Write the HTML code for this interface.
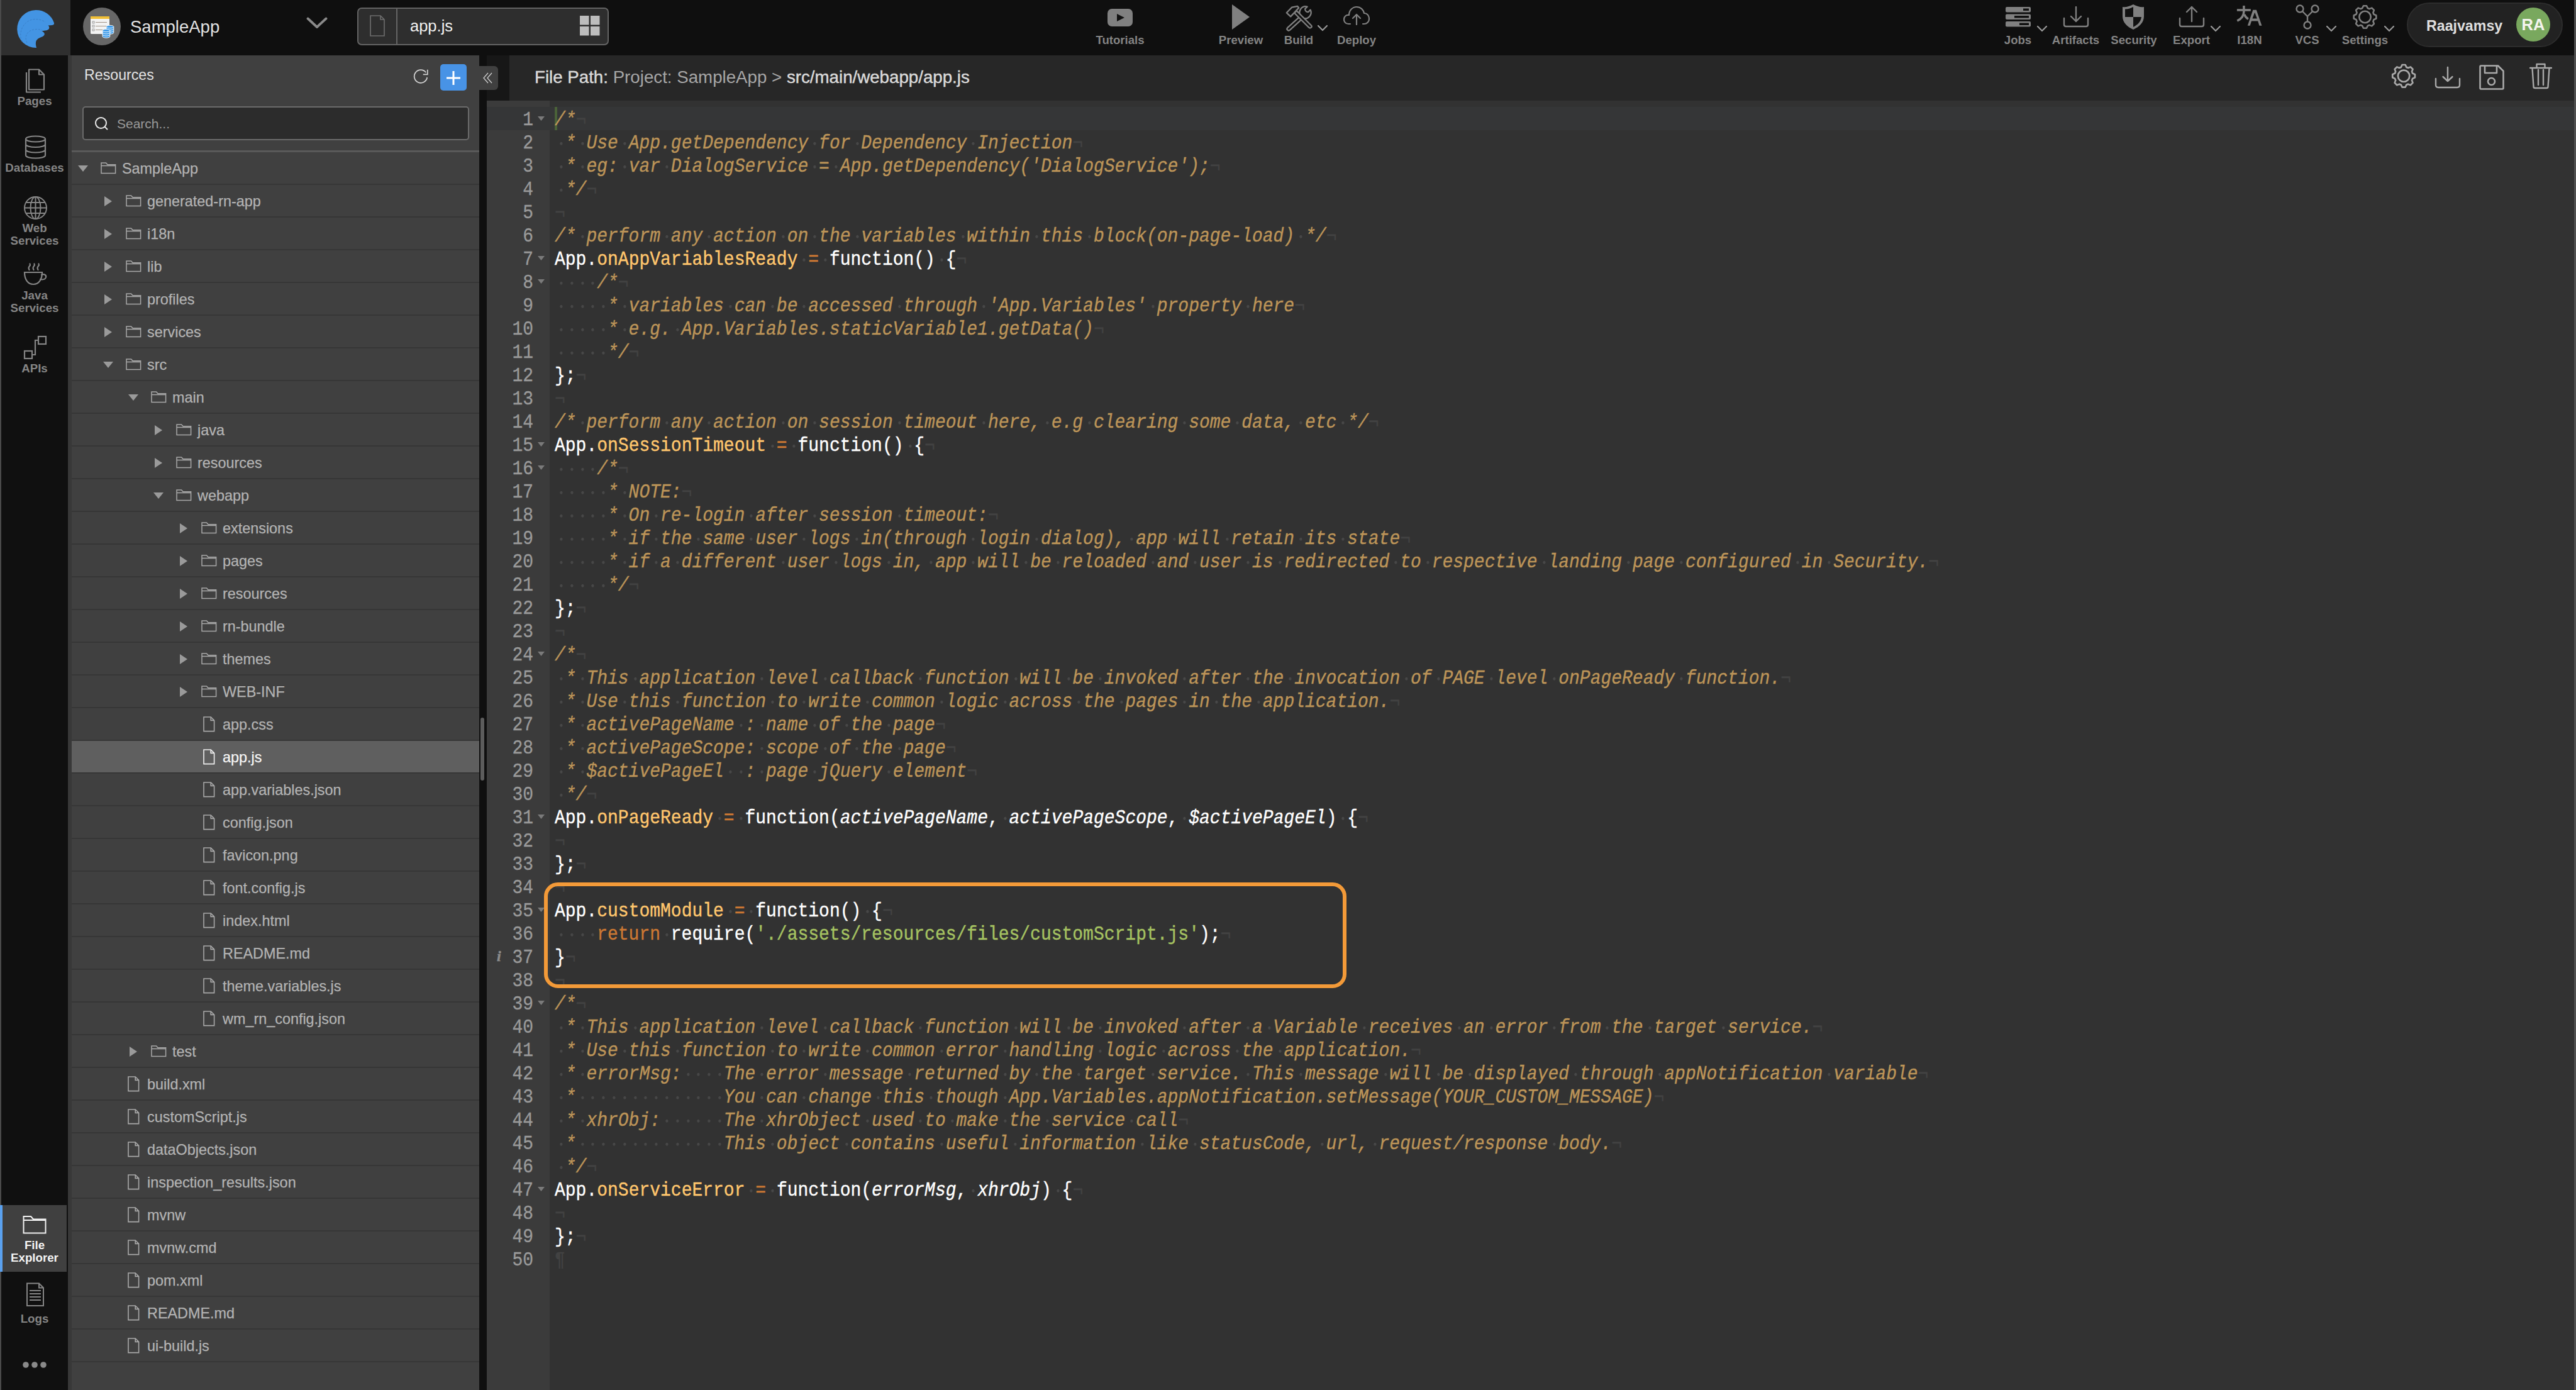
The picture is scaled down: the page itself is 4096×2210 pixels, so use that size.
<!DOCTYPE html><html><head><meta charset="utf-8"><title>app.js</title><style>
html,body{margin:0;padding:0}
body{width:4096px;height:2210px;overflow:hidden;position:relative;background:#0f0f0f;font-family:"Liberation Sans",sans-serif}
.a{position:absolute}
.t{position:absolute;white-space:pre;line-height:1}
.lbl{position:absolute;white-space:pre;line-height:1;font-weight:bold;color:#848484;font-size:18.6px;text-align:center}
.rl{position:absolute;white-space:pre;line-height:19.5px;font-weight:bold;color:#858585;font-size:18.7px;text-align:center;left:2px;width:106px}
.row{position:absolute;left:114px;width:648px;height:50px;border-bottom:2px solid #353535;background:#404040}
.row .tx{position:absolute;white-space:pre;font-size:23.4px;line-height:1;color:#b3b3b3;top:13px}
.cl{position:absolute;left:882px;height:37px;white-space:pre;font-family:"Liberation Mono",monospace;font-size:28px;line-height:37px;color:#fff;transform:translateY(2.2px) scaleY(1.13);transform-origin:0 55%;-webkit-text-stroke:0.35px currentColor}
.gn{position:absolute;left:774px;width:74px;height:37px;text-align:right;font-family:"Liberation Mono",monospace;font-size:28px;line-height:37px;color:#999;transform:translateY(2.2px) scaleY(1.13);transform-origin:0 55%;-webkit-text-stroke:0.3px currentColor}
.c{color:#BC9458;font-style:italic}
.i{color:#424242;font-style:normal}
.d{display:inline-block;width:16.8px;height:37px;vertical-align:top;background:radial-gradient(circle at 10.4px 19.2px,#474747 0,#474747 1.7px,rgba(71,71,71,0) 2.5px)}
.f{color:#FFC66D}
.k{color:#CC7833}
.s{color:#A5C261}
.p{font-style:italic}
</style></head><body><div class="a" style="left:0;top:0;width:2px;height:2210px;background:#4a4a4a"></div>
<div class="a" style="left:2px;top:0;width:110px;height:88px;background:#2f2f2f"></div>
<div class="a" style="left:2px;top:88px;width:106px;height:2122px;background:#101010"></div>
<div class="a" style="left:108px;top:88px;width:6px;height:2122px;background:#383838"></div>
<div class="a" style="left:114px;top:88px;width:648px;height:2122px;background:#404040"></div>
<div class="a" style="left:762px;top:88px;width:12px;height:2122px;background:#0f0f0f"></div>
<div class="a" style="left:774px;top:88px;width:36px;height:72px;background:#171717"></div>
<div class="a" style="left:810px;top:88px;width:3283px;height:72px;background:#272727"></div>
<div class="a" style="left:774px;top:160px;width:100px;height:2050px;background:#3b3b3b"></div>
<div class="a" style="left:874px;top:160px;width:3219px;height:2050px;background:#323232"></div>
<div class="a" style="left:4093px;top:0;width:3px;height:2210px;background:#505050"></div>
<svg class="a" style="left:0;top:0" width="112" height="88" viewBox="0 0 112 88">
<path d="M56.5 16 A30 30 0 0 1 86 36.5 Q86.5 39.5 83 40 L76.5 40.5 Q79 42.5 78 45.5 Q76.5 48 72 48.6 L66.5 49.2 Q71 51.5 70.8 54.5 Q70 57.5 65.5 59 Q59.5 61 57.5 65 Q56 69 58 76 A30 30 0 0 1 56.5 16 Z" fill="#4394e3"/>
<path d="M35 66 C30 56 33 40 46 33 C54 29 64 30 72 35" fill="none" stroke="#3a80c8" stroke-width="1" stroke-dasharray="3 2"/>
<path d="M43 68 C39 60 41 52 50 48 C56 46 62 46 67 48" fill="none" stroke="#3a80c8" stroke-width="1" stroke-dasharray="3 2"/>
</svg>
<svg class="a" style="left:132px;top:12px" width="60" height="60" viewBox="0 0 60 60">
<circle cx="30" cy="30" r="30" fill="#676767"/>
<rect x="12" y="14" width="30" height="28" rx="1.5" fill="#f3f3f3"/>
<rect x="12" y="14" width="30" height="4" fill="#f0bf36"/>
<rect x="15" y="22" width="3" height="3" fill="none" stroke="#888" stroke-width="0.8"/>
<rect x="15" y="28" width="3" height="3" fill="none" stroke="#888" stroke-width="0.8"/>
<rect x="15" y="34" width="3" height="3" fill="none" stroke="#888" stroke-width="0.8"/>
<line x1="20" y1="23.5" x2="38" y2="23.5" stroke="#8a7a6a" stroke-width="0.8"/>
<line x1="20" y1="29.5" x2="38" y2="29.5" stroke="#8a7a6a" stroke-width="0.8"/>
<line x1="20" y1="35.5" x2="34" y2="35.5" stroke="#8a7a6a" stroke-width="0.8"/>
<g fill="#3d9be9" stroke="#fff" stroke-width="0.9">
<path d="M37 30.5 v9.5 a5.9 2.2 0 0 0 11.8 0 v-9.5"/><ellipse cx="42.9" cy="30.5" rx="5.9" ry="2.2"/><path d="M37 33.7 a5.9 2.2 0 0 0 11.8 0 M37 36.9 a5.9 2.2 0 0 0 11.8 0" fill="none"/>
<path d="M31 36.5 v9.5 a5.9 2.2 0 0 0 11.8 0 v-9.5"/><ellipse cx="36.9" cy="36.5" rx="5.9" ry="2.2"/><path d="M31 39.7 a5.9 2.2 0 0 0 11.8 0 M31 42.9 a5.9 2.2 0 0 0 11.8 0" fill="none"/>
</g>
</svg>
<div class="t" style="left:207px;top:29px;font-size:27.5px;color:#e2e2e2">SampleApp</div>
<svg class="a" style="left:486px;top:26px" width="36" height="22" viewBox="0 0 36 22"><path d="M3.5 3.5 L18 17 L32.5 3.5" fill="none" stroke="#8a8a8a" stroke-width="3.8" stroke-linecap="round" stroke-linejoin="round"/></svg>
<div class="a" style="left:568px;top:12px;width:396px;height:56px;border:2px solid #646464;border-radius:7px;background:#2e2e2e"></div>
<div class="a" style="left:630px;top:14px;width:2px;height:56px;background:#646464"></div>
<svg class="a" style="left:586px;top:23px" width="28" height="36" viewBox="0 0 28 36"><path d="M3 2 H19 L25 8 V34 H3 Z M19 2 V8 H25" fill="none" stroke="#6e6e6e" stroke-width="1.6"/></svg>
<div class="t" style="left:652px;top:29px;font-size:25.5px;color:#f2f2f2">app.js</div>
<svg class="a" style="left:922px;top:25px" width="32" height="32" viewBox="0 0 32 32" fill="#bdbdbd"><rect x="0" y="0" width="14.5" height="14.5"/><rect x="17" y="0" width="14.5" height="14.5"/><rect x="0" y="17" width="14.5" height="14.5"/><rect x="17" y="17" width="14.5" height="14.5"/></svg>
<svg class="a" style="left:1760px;top:13px" width="42" height="30" viewBox="0 0 42 30"><rect x="1" y="1" width="40" height="28" rx="7" fill="#808080"/><path d="M16 9 L28 15 L16 21 Z" fill="#111"/></svg>
<div class="lbl" style="left:1721px;width:120px;top:54.7px">Tutorials</div>
<svg class="a" style="left:1958px;top:7px" width="30" height="40" viewBox="0 0 30 40"><path d="M1 0 L29 20 L1 40 Z" fill="#808080"/></svg>
<div class="lbl" style="left:1913px;width:120px;top:54.7px">Preview</div>
<svg class="a" style="left:2040px;top:2px" width="50" height="50" viewBox="0 0 50 50" fill="none" stroke="#808080" stroke-width="2.3" stroke-linejoin="round" stroke-linecap="round">
<path d="M31.8 26.8 L10.8 45.8 A2.5 2.5 0 0 1 7.2 42.2 L28.2 23.2"/>
<path d="M28.2 23.2 A9.5 9.5 0 0 1 38.6 8.6 L35.2 12 A4.4 4.4 0 0 0 40.2 17 L43.6 13.6 A9.5 9.5 0 0 1 31.8 26.8"/>
<path d="M21.8 15.2 L44.8 38.2 A2.5 2.5 0 0 1 41.2 41.8 L18.2 18.8 Z" fill="#111"/>
<path d="M5.8 18.3 L14.2 9.6 L23 7.8 L25.2 10.4 L12.2 24.4 Z" fill="#111"/>
</svg>
<svg class="a" style="left:2094px;top:39px" width="18" height="11" viewBox="0 0 18 11"><path d="M2 2 L9 9 L16 2" fill="none" stroke="#9a9a9a" stroke-width="2.2" stroke-linecap="round"/></svg>
<div class="lbl" style="left:2005px;width:120px;top:54.7px">Build</div>
<svg class="a" style="left:2136px;top:9px" width="42" height="31" viewBox="0 0 42 31" fill="none" stroke="#808080" stroke-width="2.2" stroke-linecap="round" stroke-linejoin="round"><path d="M11 29 H8 C3 29 1 25 1 22 C1 17 5 14 9 15 C9 7 15 2 21 2 C28 2 32 7 33 12 C38 12 41 16 41 21 C41 26 37 29 33 29 H31"/><path d="M21 30 V14 M15 20 L21 14 L27 20"/></svg>
<div class="lbl" style="left:2097px;width:120px;top:54.7px">Deploy</div>
<svg class="a" style="left:3188px;top:10px" width="42" height="33" viewBox="0 0 42 33"><g fill="#808080"><rect x="1" y="1" width="40" height="8.5" rx="2"/><rect x="1" y="12.5" width="40" height="8.5" rx="2"/><rect x="1" y="24" width="40" height="8.5" rx="2"/></g><g fill="#111"><rect x="29" y="3.5" width="9" height="3.5"/><rect x="15" y="15" width="23" height="3.5"/><rect x="23" y="26.5" width="15" height="3.5"/></g></svg>
<svg class="a" style="left:3238px;top:40px" width="18" height="11" viewBox="0 0 18 11"><path d="M2 2 L9 9 L16 2" fill="none" stroke="#9a9a9a" stroke-width="2.2" stroke-linecap="round"/></svg>
<div class="lbl" style="left:3148.5px;width:120px;top:54.7px">Jobs</div>
<svg class="a" style="left:3280px;top:10px" width="42" height="34" viewBox="0 0 42 34" fill="none" stroke="#808080" stroke-width="2.4" stroke-linecap="round" stroke-linejoin="round"><path d="M2 19 V29 C2 31 3 32 5 32 H37 C39 32 40 31 40 29 V19"/><path d="M21 1 V24 M13 16 L21 24 L29 16"/></svg>
<div class="lbl" style="left:3240.5px;width:120px;top:54.7px">Artifacts</div>
<svg class="a" style="left:3374px;top:6px" width="36" height="42" viewBox="0 0 36 42"><path d="M18 1 C12 4 6 6 1 5 V20 C1 30 9 37 18 41 C27 37 35 30 35 20 V5 C30 6 24 4 18 1 Z" fill="#808080"/><path d="M18 5 C14 7 9 9 5 8.5 V21 H18 Z" fill="#111"/><path d="M18 21 H31 C30 29 24 34 18 37 Z" fill="#111"/></svg>
<div class="lbl" style="left:3333px;width:120px;top:54.7px">Security</div>
<svg class="a" style="left:3464px;top:9px" width="42" height="35" viewBox="0 0 42 35" fill="none" stroke="#808080" stroke-width="2.4" stroke-linecap="round" stroke-linejoin="round"><path d="M2 20 V30 C2 32 3 33 5 33 H37 C39 33 40 32 40 30 V20"/><path d="M21 25 V2 M13 10 L21 2 L29 10"/></svg>
<svg class="a" style="left:3514px;top:40px" width="18" height="11" viewBox="0 0 18 11"><path d="M2 2 L9 9 L16 2" fill="none" stroke="#9a9a9a" stroke-width="2.2" stroke-linecap="round"/></svg>
<div class="lbl" style="left:3424.5px;width:120px;top:54.7px">Export</div>
<svg class="a" style="left:3545px;top:0px" width="65" height="50" viewBox="0 0 65 50"><g fill="none" stroke="#808080" stroke-width="3.5"><path d="M11.9 16 H33.8"/><path d="M22.9 9 V18 C22.9 25 19 30 12.3 33.2"/><path d="M23.6 23 C25 26.5 27 28.5 29.9 30.2"/></g><path fill-rule="evenodd" d="M28.8 40.8 L37.4 15.8 H42.8 L51.4 40.8 H47.5 L45.2 33.5 H35 L32.7 40.8 Z M36.5 29.5 H43.9 L40.2 19.8 Z" fill="#808080"/></svg>
<div class="lbl" style="left:3517px;width:120px;top:54.7px">I18N</div>
<svg class="a" style="left:3650px;top:7px" width="38" height="40" viewBox="0 0 38 40" fill="none" stroke="#808080" stroke-width="2.4"><circle cx="7" cy="7" r="5.5"/><circle cx="31" cy="7" r="5.5"/><circle cx="19" cy="33" r="5.5"/><path d="M11 11 L19 19 L27 11 M19 19 V27.5"/></svg>
<svg class="a" style="left:3698px;top:40px" width="18" height="11" viewBox="0 0 18 11"><path d="M2 2 L9 9 L16 2" fill="none" stroke="#9a9a9a" stroke-width="2.2" stroke-linecap="round"/></svg>
<div class="lbl" style="left:3608.5px;width:120px;top:54.7px">VCS</div>
<svg class="a" style="left:3735px;top:2px" width="50" height="50" viewBox="0 0 50 50" fill="none" stroke="#808080" stroke-width="2.6" stroke-linejoin="round"><path d="M21.23 11.04 L22.99 7.18 L28.01 7.18 L29.77 11.04 A14.60 14.60 0 0 1 32.35 12.11 L36.33 10.62 L39.88 14.17 L38.39 18.15 A14.60 14.60 0 0 1 39.46 20.73 L43.32 22.49 L43.32 27.51 L39.46 29.27 A14.60 14.60 0 0 1 38.39 31.85 L39.88 35.83 L36.33 39.38 L32.35 37.89 A14.60 14.60 0 0 1 29.77 38.96 L28.01 42.82 L22.99 42.82 L21.23 38.96 A14.60 14.60 0 0 1 18.65 37.89 L14.67 39.38 L11.12 35.83 L12.61 31.85 A14.60 14.60 0 0 1 11.54 29.27 L7.68 27.51 L7.68 22.49 L11.54 20.73 A14.60 14.60 0 0 1 12.61 18.15 L11.12 14.17 L14.67 10.62 L18.65 12.11 A14.60 14.60 0 0 1 21.23 11.04 Z"/><circle cx="25.5" cy="25" r="9.2"/></svg>
<svg class="a" style="left:3790px;top:40px" width="18" height="11" viewBox="0 0 18 11"><path d="M2 2 L9 9 L16 2" fill="none" stroke="#9a9a9a" stroke-width="2.2" stroke-linecap="round"/></svg>
<div class="lbl" style="left:3700.5px;width:120px;top:54.7px">Settings</div>
<div class="a" style="left:3827px;top:4px;width:244px;height:67px;border:2px solid #2c2c2c;border-radius:36px;background:#222"></div>
<div class="t" style="left:3858px;top:30px;font-size:23.2px;font-weight:bold;color:#dedede">Raajvamsy</div>
<div class="a" style="left:4001px;top:12px;width:54px;height:54px;border-radius:27px;background:#79a85e"></div>
<div class="t" style="left:4001px;width:54px;text-align:center;top:27px;font-size:25.5px;font-weight:bold;color:#f4f4ee">RA</div>
<svg class="a" style="left:40px;top:109px" width="34" height="39" viewBox="0 0 34 39" fill="none" stroke="#858585" stroke-width="2.2" stroke-linejoin="round"><path d="M6 1.5 H22 L30 9.5 V33.5 H6 Z"/><path d="M22 1.5 V9.5 H30"/><path d="M2 6 V37.5 H25"/></svg>
<div class="rl" style="top:151px">Pages</div>
<svg class="a" style="left:39px;top:215px" width="35" height="38" viewBox="0 0 35 38" fill="none" stroke="#858585" stroke-width="2.2"><ellipse cx="17.5" cy="6" rx="15.5" ry="4.5"/><path d="M2 6 V32 C2 34.5 9 36.5 17.5 36.5 C26 36.5 33 34.5 33 32 V6"/><path d="M2 14.5 C2 17 9 19 17.5 19 C26 19 33 17 33 14.5 M2 23 C2 25.5 9 27.5 17.5 27.5 C26 27.5 33 25.5 33 23"/></svg>
<div class="rl" style="top:257px">Databases</div>
<svg class="a" style="left:37px;top:311px" width="39" height="39" viewBox="0 0 39 39" fill="none" stroke="#858585" stroke-width="2"><circle cx="19.5" cy="19.5" r="17.5"/><ellipse cx="19.5" cy="19.5" rx="8" ry="17.5"/><path d="M19.5 2 V37 M2 19.5 H37 M4.5 11 H34.5 M4.5 28 H34.5"/></svg>
<div class="rl" style="top:353px">Web
Services</div>
<svg class="a" style="left:37px;top:418px" width="39" height="37" viewBox="0 0 39 37" fill="none" stroke="#858585" stroke-width="2.2" stroke-linecap="round"><path d="M9.5 11 C8 8.5 8.5 6.5 10 5 C11 4 11 2.5 10.5 1.5 M16.5 11 C15 8.5 15.5 6.5 17 5 C18 4 18 2.5 17.5 1.5 M23.5 11 C22 8.5 22.5 6.5 24 5 C25 4 25 2.5 24.5 1.5"/><path d="M2 15 H30 C30 26 25 34 16 34 C7 34 2 26 2 15 Z"/><path d="M29 19 C33 17 37 19 36 23 C35 26 31 27 27 26"/></svg>
<div class="rl" style="top:460px">Java
Services</div>
<svg class="a" style="left:37px;top:533px" width="39" height="39" viewBox="0 0 39 39" fill="none" stroke="#858585" stroke-width="2.2"><rect x="24" y="2" width="12" height="12"/><rect x="2" y="25" width="12" height="12"/><path d="M14 31 H19 V8 H24"/></svg>
<div class="rl" style="top:576px">APIs</div>
<div class="a" style="left:2px;top:1916px;width:104px;height:106px;background:#404040"></div>
<div class="a" style="left:0;top:1916px;width:4px;height:106px;background:#5aa1ef"></div>
<svg class="a" style="left:36px;top:1932px" width="38" height="30" viewBox="0 0 38 30" fill="none" stroke="#f2f2f2" stroke-width="2"><path d="M1.5 28.5 V2 H13 L17 6.5 H36.5 V28.5 Z M1.5 8 H36.5"/></svg>
<div class="rl" style="top:1970px;color:#f4f4f4">File
Explorer</div>
<svg class="a" style="left:41px;top:2039px" width="30" height="39" viewBox="0 0 30 39" fill="none" stroke="#858585" stroke-width="2"><path d="M2 1.5 H21 L28 8.5 V37 H2 Z M21 1.5 V8.5 H28"/><path d="M6 13 H24 M6 18 H24 M6 23 H24 M6 28 H24" stroke-width="2.2"/></svg>
<div class="rl" style="top:2087px">Logs</div>
<svg class="a" style="left:35px;top:2164px" width="42" height="12" viewBox="0 0 42 12" fill="#8a8a8a"><circle cx="6" cy="6" r="4.8"/><circle cx="20" cy="6" r="4.8"/><circle cx="34" cy="6" r="4.8"/></svg>
<div class="t" style="left:134px;top:108px;font-size:23.2px;color:#e3e3e3">Resources</div>
<svg class="a" style="left:656px;top:109px" width="27" height="26" viewBox="0 0 27 26" fill="none" stroke="#d2d2d2" stroke-width="1.7"><path d="M23.2 14 A10.3 10.3 0 1 1 21.2 6.2"/><path d="M23.8 1.8 V9.4 H16.8"/></svg>
<div class="a" style="left:700px;top:102px;width:42px;height:42px;border-radius:5px;background:#4893e6"></div>
<svg class="a" style="left:700px;top:102px" width="42" height="42" viewBox="0 0 42 42" stroke="#fff" stroke-width="3"><path d="M21 11 V33 M10 22 H32"/></svg>
<div class="a" style="left:762px;top:105px;width:30px;height:38px;border-radius:0 6px 6px 0;background:#404040"></div>
<svg class="a" style="left:767px;top:114px" width="18" height="20" viewBox="0 0 18 20" fill="none" stroke="#d0d0d0" stroke-width="1.3"><path d="M9 2 L2 10 L9 18 M15 2 L8 10 L15 18"/></svg>
<div class="a" style="left:131px;top:169px;width:611px;height:50px;border:2px solid #6b6b6b;border-radius:5px;background:#2c2c2c"></div>
<svg class="a" style="left:150px;top:185px" width="24" height="24" viewBox="0 0 24 24" fill="none" stroke="#eaeaea" stroke-width="2"><circle cx="10.5" cy="10.5" r="8.5"/><path d="M16.5 16.5 L21 21"/></svg>
<div class="t" style="left:186px;top:185.5px;font-size:21px;color:#9a9a9a">Search...</div>
<div class="a" style="left:114px;top:239px;width:648px;height:3px;background:#595959"></div>
<div class="a" style="left:114px;top:242px;width:648px;height:50px;background:#404040"></div>
<div class="a" style="left:114px;top:292px;width:648px;height:2px;background:#363636"></div>
<svg class="a" style="left:124px;top:263px" width="16" height="10" viewBox="0 0 16 10"><path d="M0 0 H16 L8 10 Z" fill="#9a9a9a"/></svg>
<svg class="a" style="left:160px;top:258px" width="25" height="20" viewBox="0 0 25 20" fill="none" stroke="#a8a8a8" stroke-width="1.5"><path d="M1 17.6 V1 H8.5 L11 3.8 H23.6 V17.6 Z M1 5.4 H23.6"/></svg>
<div class="t" style="left:194px;top:256.5px;font-size:23.4px;color:#b3b3b3;-webkit-text-stroke:0.25px #b3b3b3">SampleApp</div>
<div class="a" style="left:114px;top:294px;width:648px;height:50px;background:#404040"></div>
<div class="a" style="left:114px;top:344px;width:648px;height:2px;background:#363636"></div>
<svg class="a" style="left:166px;top:312px" width="12" height="16" viewBox="0 0 12 16"><path d="M0 0 V16 L12 8 Z" fill="#9a9a9a"/></svg>
<svg class="a" style="left:200px;top:310px" width="25" height="20" viewBox="0 0 25 20" fill="none" stroke="#a8a8a8" stroke-width="1.5"><path d="M1 17.6 V1 H8.5 L11 3.8 H23.6 V17.6 Z M1 5.4 H23.6"/></svg>
<div class="t" style="left:234px;top:308.5px;font-size:23.4px;color:#b3b3b3;-webkit-text-stroke:0.25px #b3b3b3">generated-rn-app</div>
<div class="a" style="left:114px;top:346px;width:648px;height:50px;background:#404040"></div>
<div class="a" style="left:114px;top:396px;width:648px;height:2px;background:#363636"></div>
<svg class="a" style="left:166px;top:364px" width="12" height="16" viewBox="0 0 12 16"><path d="M0 0 V16 L12 8 Z" fill="#9a9a9a"/></svg>
<svg class="a" style="left:200px;top:362px" width="25" height="20" viewBox="0 0 25 20" fill="none" stroke="#a8a8a8" stroke-width="1.5"><path d="M1 17.6 V1 H8.5 L11 3.8 H23.6 V17.6 Z M1 5.4 H23.6"/></svg>
<div class="t" style="left:234px;top:360.5px;font-size:23.4px;color:#b3b3b3;-webkit-text-stroke:0.25px #b3b3b3">i18n</div>
<div class="a" style="left:114px;top:398px;width:648px;height:50px;background:#404040"></div>
<div class="a" style="left:114px;top:448px;width:648px;height:2px;background:#363636"></div>
<svg class="a" style="left:166px;top:416px" width="12" height="16" viewBox="0 0 12 16"><path d="M0 0 V16 L12 8 Z" fill="#9a9a9a"/></svg>
<svg class="a" style="left:200px;top:414px" width="25" height="20" viewBox="0 0 25 20" fill="none" stroke="#a8a8a8" stroke-width="1.5"><path d="M1 17.6 V1 H8.5 L11 3.8 H23.6 V17.6 Z M1 5.4 H23.6"/></svg>
<div class="t" style="left:234px;top:412.5px;font-size:23.4px;color:#b3b3b3;-webkit-text-stroke:0.25px #b3b3b3">lib</div>
<div class="a" style="left:114px;top:450px;width:648px;height:50px;background:#404040"></div>
<div class="a" style="left:114px;top:500px;width:648px;height:2px;background:#363636"></div>
<svg class="a" style="left:166px;top:468px" width="12" height="16" viewBox="0 0 12 16"><path d="M0 0 V16 L12 8 Z" fill="#9a9a9a"/></svg>
<svg class="a" style="left:200px;top:466px" width="25" height="20" viewBox="0 0 25 20" fill="none" stroke="#a8a8a8" stroke-width="1.5"><path d="M1 17.6 V1 H8.5 L11 3.8 H23.6 V17.6 Z M1 5.4 H23.6"/></svg>
<div class="t" style="left:234px;top:464.5px;font-size:23.4px;color:#b3b3b3;-webkit-text-stroke:0.25px #b3b3b3">profiles</div>
<div class="a" style="left:114px;top:502px;width:648px;height:50px;background:#404040"></div>
<div class="a" style="left:114px;top:552px;width:648px;height:2px;background:#363636"></div>
<svg class="a" style="left:166px;top:520px" width="12" height="16" viewBox="0 0 12 16"><path d="M0 0 V16 L12 8 Z" fill="#9a9a9a"/></svg>
<svg class="a" style="left:200px;top:518px" width="25" height="20" viewBox="0 0 25 20" fill="none" stroke="#a8a8a8" stroke-width="1.5"><path d="M1 17.6 V1 H8.5 L11 3.8 H23.6 V17.6 Z M1 5.4 H23.6"/></svg>
<div class="t" style="left:234px;top:516.5px;font-size:23.4px;color:#b3b3b3;-webkit-text-stroke:0.25px #b3b3b3">services</div>
<div class="a" style="left:114px;top:554px;width:648px;height:50px;background:#404040"></div>
<div class="a" style="left:114px;top:604px;width:648px;height:2px;background:#363636"></div>
<svg class="a" style="left:164px;top:575px" width="16" height="10" viewBox="0 0 16 10"><path d="M0 0 H16 L8 10 Z" fill="#9a9a9a"/></svg>
<svg class="a" style="left:200px;top:570px" width="25" height="20" viewBox="0 0 25 20" fill="none" stroke="#a8a8a8" stroke-width="1.5"><path d="M1 17.6 V1 H8.5 L11 3.8 H23.6 V17.6 Z M1 5.4 H23.6"/></svg>
<div class="t" style="left:234px;top:568.5px;font-size:23.4px;color:#b3b3b3;-webkit-text-stroke:0.25px #b3b3b3">src</div>
<div class="a" style="left:114px;top:606px;width:648px;height:50px;background:#404040"></div>
<div class="a" style="left:114px;top:656px;width:648px;height:2px;background:#363636"></div>
<svg class="a" style="left:204px;top:627px" width="16" height="10" viewBox="0 0 16 10"><path d="M0 0 H16 L8 10 Z" fill="#9a9a9a"/></svg>
<svg class="a" style="left:240px;top:622px" width="25" height="20" viewBox="0 0 25 20" fill="none" stroke="#a8a8a8" stroke-width="1.5"><path d="M1 17.6 V1 H8.5 L11 3.8 H23.6 V17.6 Z M1 5.4 H23.6"/></svg>
<div class="t" style="left:274px;top:620.5px;font-size:23.4px;color:#b3b3b3;-webkit-text-stroke:0.25px #b3b3b3">main</div>
<div class="a" style="left:114px;top:658px;width:648px;height:50px;background:#404040"></div>
<div class="a" style="left:114px;top:708px;width:648px;height:2px;background:#363636"></div>
<svg class="a" style="left:246px;top:676px" width="12" height="16" viewBox="0 0 12 16"><path d="M0 0 V16 L12 8 Z" fill="#9a9a9a"/></svg>
<svg class="a" style="left:280px;top:674px" width="25" height="20" viewBox="0 0 25 20" fill="none" stroke="#a8a8a8" stroke-width="1.5"><path d="M1 17.6 V1 H8.5 L11 3.8 H23.6 V17.6 Z M1 5.4 H23.6"/></svg>
<div class="t" style="left:314px;top:672.5px;font-size:23.4px;color:#b3b3b3;-webkit-text-stroke:0.25px #b3b3b3">java</div>
<div class="a" style="left:114px;top:710px;width:648px;height:50px;background:#404040"></div>
<div class="a" style="left:114px;top:760px;width:648px;height:2px;background:#363636"></div>
<svg class="a" style="left:246px;top:728px" width="12" height="16" viewBox="0 0 12 16"><path d="M0 0 V16 L12 8 Z" fill="#9a9a9a"/></svg>
<svg class="a" style="left:280px;top:726px" width="25" height="20" viewBox="0 0 25 20" fill="none" stroke="#a8a8a8" stroke-width="1.5"><path d="M1 17.6 V1 H8.5 L11 3.8 H23.6 V17.6 Z M1 5.4 H23.6"/></svg>
<div class="t" style="left:314px;top:724.5px;font-size:23.4px;color:#b3b3b3;-webkit-text-stroke:0.25px #b3b3b3">resources</div>
<div class="a" style="left:114px;top:762px;width:648px;height:50px;background:#404040"></div>
<div class="a" style="left:114px;top:812px;width:648px;height:2px;background:#363636"></div>
<svg class="a" style="left:244px;top:783px" width="16" height="10" viewBox="0 0 16 10"><path d="M0 0 H16 L8 10 Z" fill="#9a9a9a"/></svg>
<svg class="a" style="left:280px;top:778px" width="25" height="20" viewBox="0 0 25 20" fill="none" stroke="#a8a8a8" stroke-width="1.5"><path d="M1 17.6 V1 H8.5 L11 3.8 H23.6 V17.6 Z M1 5.4 H23.6"/></svg>
<div class="t" style="left:314px;top:776.5px;font-size:23.4px;color:#b3b3b3;-webkit-text-stroke:0.25px #b3b3b3">webapp</div>
<div class="a" style="left:114px;top:814px;width:648px;height:50px;background:#404040"></div>
<div class="a" style="left:114px;top:864px;width:648px;height:2px;background:#363636"></div>
<svg class="a" style="left:286px;top:832px" width="12" height="16" viewBox="0 0 12 16"><path d="M0 0 V16 L12 8 Z" fill="#9a9a9a"/></svg>
<svg class="a" style="left:320px;top:830px" width="25" height="20" viewBox="0 0 25 20" fill="none" stroke="#a8a8a8" stroke-width="1.5"><path d="M1 17.6 V1 H8.5 L11 3.8 H23.6 V17.6 Z M1 5.4 H23.6"/></svg>
<div class="t" style="left:354px;top:828.5px;font-size:23.4px;color:#b3b3b3;-webkit-text-stroke:0.25px #b3b3b3">extensions</div>
<div class="a" style="left:114px;top:866px;width:648px;height:50px;background:#404040"></div>
<div class="a" style="left:114px;top:916px;width:648px;height:2px;background:#363636"></div>
<svg class="a" style="left:286px;top:884px" width="12" height="16" viewBox="0 0 12 16"><path d="M0 0 V16 L12 8 Z" fill="#9a9a9a"/></svg>
<svg class="a" style="left:320px;top:882px" width="25" height="20" viewBox="0 0 25 20" fill="none" stroke="#a8a8a8" stroke-width="1.5"><path d="M1 17.6 V1 H8.5 L11 3.8 H23.6 V17.6 Z M1 5.4 H23.6"/></svg>
<div class="t" style="left:354px;top:880.5px;font-size:23.4px;color:#b3b3b3;-webkit-text-stroke:0.25px #b3b3b3">pages</div>
<div class="a" style="left:114px;top:918px;width:648px;height:50px;background:#404040"></div>
<div class="a" style="left:114px;top:968px;width:648px;height:2px;background:#363636"></div>
<svg class="a" style="left:286px;top:936px" width="12" height="16" viewBox="0 0 12 16"><path d="M0 0 V16 L12 8 Z" fill="#9a9a9a"/></svg>
<svg class="a" style="left:320px;top:934px" width="25" height="20" viewBox="0 0 25 20" fill="none" stroke="#a8a8a8" stroke-width="1.5"><path d="M1 17.6 V1 H8.5 L11 3.8 H23.6 V17.6 Z M1 5.4 H23.6"/></svg>
<div class="t" style="left:354px;top:932.5px;font-size:23.4px;color:#b3b3b3;-webkit-text-stroke:0.25px #b3b3b3">resources</div>
<div class="a" style="left:114px;top:970px;width:648px;height:50px;background:#404040"></div>
<div class="a" style="left:114px;top:1020px;width:648px;height:2px;background:#363636"></div>
<svg class="a" style="left:286px;top:988px" width="12" height="16" viewBox="0 0 12 16"><path d="M0 0 V16 L12 8 Z" fill="#9a9a9a"/></svg>
<svg class="a" style="left:320px;top:986px" width="25" height="20" viewBox="0 0 25 20" fill="none" stroke="#a8a8a8" stroke-width="1.5"><path d="M1 17.6 V1 H8.5 L11 3.8 H23.6 V17.6 Z M1 5.4 H23.6"/></svg>
<div class="t" style="left:354px;top:984.5px;font-size:23.4px;color:#b3b3b3;-webkit-text-stroke:0.25px #b3b3b3">rn-bundle</div>
<div class="a" style="left:114px;top:1022px;width:648px;height:50px;background:#404040"></div>
<div class="a" style="left:114px;top:1072px;width:648px;height:2px;background:#363636"></div>
<svg class="a" style="left:286px;top:1040px" width="12" height="16" viewBox="0 0 12 16"><path d="M0 0 V16 L12 8 Z" fill="#9a9a9a"/></svg>
<svg class="a" style="left:320px;top:1038px" width="25" height="20" viewBox="0 0 25 20" fill="none" stroke="#a8a8a8" stroke-width="1.5"><path d="M1 17.6 V1 H8.5 L11 3.8 H23.6 V17.6 Z M1 5.4 H23.6"/></svg>
<div class="t" style="left:354px;top:1036.5px;font-size:23.4px;color:#b3b3b3;-webkit-text-stroke:0.25px #b3b3b3">themes</div>
<div class="a" style="left:114px;top:1074px;width:648px;height:50px;background:#404040"></div>
<div class="a" style="left:114px;top:1124px;width:648px;height:2px;background:#363636"></div>
<svg class="a" style="left:286px;top:1092px" width="12" height="16" viewBox="0 0 12 16"><path d="M0 0 V16 L12 8 Z" fill="#9a9a9a"/></svg>
<svg class="a" style="left:320px;top:1090px" width="25" height="20" viewBox="0 0 25 20" fill="none" stroke="#a8a8a8" stroke-width="1.5"><path d="M1 17.6 V1 H8.5 L11 3.8 H23.6 V17.6 Z M1 5.4 H23.6"/></svg>
<div class="t" style="left:354px;top:1088.5px;font-size:23.4px;color:#b3b3b3;-webkit-text-stroke:0.25px #b3b3b3">WEB-INF</div>
<div class="a" style="left:114px;top:1126px;width:648px;height:50px;background:#404040"></div>
<div class="a" style="left:114px;top:1176px;width:648px;height:2px;background:#363636"></div>
<svg class="a" style="left:323px;top:1139px" width="19" height="25" viewBox="0 0 19 25" fill="none" stroke="#a8a8a8" stroke-width="1.6"><path d="M1 1 H12.2 L17.6 6.4 V23.6 H1 Z M12.2 1 V6.4 H17.6"/></svg>
<div class="t" style="left:354px;top:1140.5px;font-size:23.4px;color:#b3b3b3;-webkit-text-stroke:0.25px #b3b3b3">app.css</div>
<div class="a" style="left:114px;top:1178px;width:648px;height:50px;background:#5f5f5f"></div>
<div class="a" style="left:114px;top:1228px;width:648px;height:2px;background:#363636"></div>
<svg class="a" style="left:323px;top:1191px" width="19" height="25" viewBox="0 0 19 25" fill="none" stroke="#f0f0f0" stroke-width="1.6"><path d="M1 1 H12.2 L17.6 6.4 V23.6 H1 Z M12.2 1 V6.4 H17.6"/></svg>
<div class="t" style="left:354px;top:1192.5px;font-size:23.4px;color:#f6f6f6;-webkit-text-stroke:0.25px #f6f6f6">app.js</div>
<div class="a" style="left:114px;top:1230px;width:648px;height:50px;background:#404040"></div>
<div class="a" style="left:114px;top:1280px;width:648px;height:2px;background:#363636"></div>
<svg class="a" style="left:323px;top:1243px" width="19" height="25" viewBox="0 0 19 25" fill="none" stroke="#a8a8a8" stroke-width="1.6"><path d="M1 1 H12.2 L17.6 6.4 V23.6 H1 Z M12.2 1 V6.4 H17.6"/></svg>
<div class="t" style="left:354px;top:1244.5px;font-size:23.4px;color:#b3b3b3;-webkit-text-stroke:0.25px #b3b3b3">app.variables.json</div>
<div class="a" style="left:114px;top:1282px;width:648px;height:50px;background:#404040"></div>
<div class="a" style="left:114px;top:1332px;width:648px;height:2px;background:#363636"></div>
<svg class="a" style="left:323px;top:1295px" width="19" height="25" viewBox="0 0 19 25" fill="none" stroke="#a8a8a8" stroke-width="1.6"><path d="M1 1 H12.2 L17.6 6.4 V23.6 H1 Z M12.2 1 V6.4 H17.6"/></svg>
<div class="t" style="left:354px;top:1296.5px;font-size:23.4px;color:#b3b3b3;-webkit-text-stroke:0.25px #b3b3b3">config.json</div>
<div class="a" style="left:114px;top:1334px;width:648px;height:50px;background:#404040"></div>
<div class="a" style="left:114px;top:1384px;width:648px;height:2px;background:#363636"></div>
<svg class="a" style="left:323px;top:1347px" width="19" height="25" viewBox="0 0 19 25" fill="none" stroke="#a8a8a8" stroke-width="1.6"><path d="M1 1 H12.2 L17.6 6.4 V23.6 H1 Z M12.2 1 V6.4 H17.6"/></svg>
<div class="t" style="left:354px;top:1348.5px;font-size:23.4px;color:#b3b3b3;-webkit-text-stroke:0.25px #b3b3b3">favicon.png</div>
<div class="a" style="left:114px;top:1386px;width:648px;height:50px;background:#404040"></div>
<div class="a" style="left:114px;top:1436px;width:648px;height:2px;background:#363636"></div>
<svg class="a" style="left:323px;top:1399px" width="19" height="25" viewBox="0 0 19 25" fill="none" stroke="#a8a8a8" stroke-width="1.6"><path d="M1 1 H12.2 L17.6 6.4 V23.6 H1 Z M12.2 1 V6.4 H17.6"/></svg>
<div class="t" style="left:354px;top:1400.5px;font-size:23.4px;color:#b3b3b3;-webkit-text-stroke:0.25px #b3b3b3">font.config.js</div>
<div class="a" style="left:114px;top:1438px;width:648px;height:50px;background:#404040"></div>
<div class="a" style="left:114px;top:1488px;width:648px;height:2px;background:#363636"></div>
<svg class="a" style="left:323px;top:1451px" width="19" height="25" viewBox="0 0 19 25" fill="none" stroke="#a8a8a8" stroke-width="1.6"><path d="M1 1 H12.2 L17.6 6.4 V23.6 H1 Z M12.2 1 V6.4 H17.6"/></svg>
<div class="t" style="left:354px;top:1452.5px;font-size:23.4px;color:#b3b3b3;-webkit-text-stroke:0.25px #b3b3b3">index.html</div>
<div class="a" style="left:114px;top:1490px;width:648px;height:50px;background:#404040"></div>
<div class="a" style="left:114px;top:1540px;width:648px;height:2px;background:#363636"></div>
<svg class="a" style="left:323px;top:1503px" width="19" height="25" viewBox="0 0 19 25" fill="none" stroke="#a8a8a8" stroke-width="1.6"><path d="M1 1 H12.2 L17.6 6.4 V23.6 H1 Z M12.2 1 V6.4 H17.6"/></svg>
<div class="t" style="left:354px;top:1504.5px;font-size:23.4px;color:#b3b3b3;-webkit-text-stroke:0.25px #b3b3b3">README.md</div>
<div class="a" style="left:114px;top:1542px;width:648px;height:50px;background:#404040"></div>
<div class="a" style="left:114px;top:1592px;width:648px;height:2px;background:#363636"></div>
<svg class="a" style="left:323px;top:1555px" width="19" height="25" viewBox="0 0 19 25" fill="none" stroke="#a8a8a8" stroke-width="1.6"><path d="M1 1 H12.2 L17.6 6.4 V23.6 H1 Z M12.2 1 V6.4 H17.6"/></svg>
<div class="t" style="left:354px;top:1556.5px;font-size:23.4px;color:#b3b3b3;-webkit-text-stroke:0.25px #b3b3b3">theme.variables.js</div>
<div class="a" style="left:114px;top:1594px;width:648px;height:50px;background:#404040"></div>
<div class="a" style="left:114px;top:1644px;width:648px;height:2px;background:#363636"></div>
<svg class="a" style="left:323px;top:1607px" width="19" height="25" viewBox="0 0 19 25" fill="none" stroke="#a8a8a8" stroke-width="1.6"><path d="M1 1 H12.2 L17.6 6.4 V23.6 H1 Z M12.2 1 V6.4 H17.6"/></svg>
<div class="t" style="left:354px;top:1608.5px;font-size:23.4px;color:#b3b3b3;-webkit-text-stroke:0.25px #b3b3b3">wm_rn_config.json</div>
<div class="a" style="left:114px;top:1646px;width:648px;height:50px;background:#404040"></div>
<div class="a" style="left:114px;top:1696px;width:648px;height:2px;background:#363636"></div>
<svg class="a" style="left:206px;top:1664px" width="12" height="16" viewBox="0 0 12 16"><path d="M0 0 V16 L12 8 Z" fill="#9a9a9a"/></svg>
<svg class="a" style="left:240px;top:1662px" width="25" height="20" viewBox="0 0 25 20" fill="none" stroke="#a8a8a8" stroke-width="1.5"><path d="M1 17.6 V1 H8.5 L11 3.8 H23.6 V17.6 Z M1 5.4 H23.6"/></svg>
<div class="t" style="left:274px;top:1660.5px;font-size:23.4px;color:#b3b3b3;-webkit-text-stroke:0.25px #b3b3b3">test</div>
<div class="a" style="left:114px;top:1698px;width:648px;height:50px;background:#404040"></div>
<div class="a" style="left:114px;top:1748px;width:648px;height:2px;background:#363636"></div>
<svg class="a" style="left:203px;top:1711px" width="19" height="25" viewBox="0 0 19 25" fill="none" stroke="#a8a8a8" stroke-width="1.6"><path d="M1 1 H12.2 L17.6 6.4 V23.6 H1 Z M12.2 1 V6.4 H17.6"/></svg>
<div class="t" style="left:234px;top:1712.5px;font-size:23.4px;color:#b3b3b3;-webkit-text-stroke:0.25px #b3b3b3">build.xml</div>
<div class="a" style="left:114px;top:1750px;width:648px;height:50px;background:#404040"></div>
<div class="a" style="left:114px;top:1800px;width:648px;height:2px;background:#363636"></div>
<svg class="a" style="left:203px;top:1763px" width="19" height="25" viewBox="0 0 19 25" fill="none" stroke="#a8a8a8" stroke-width="1.6"><path d="M1 1 H12.2 L17.6 6.4 V23.6 H1 Z M12.2 1 V6.4 H17.6"/></svg>
<div class="t" style="left:234px;top:1764.5px;font-size:23.4px;color:#b3b3b3;-webkit-text-stroke:0.25px #b3b3b3">customScript.js</div>
<div class="a" style="left:114px;top:1802px;width:648px;height:50px;background:#404040"></div>
<div class="a" style="left:114px;top:1852px;width:648px;height:2px;background:#363636"></div>
<svg class="a" style="left:203px;top:1815px" width="19" height="25" viewBox="0 0 19 25" fill="none" stroke="#a8a8a8" stroke-width="1.6"><path d="M1 1 H12.2 L17.6 6.4 V23.6 H1 Z M12.2 1 V6.4 H17.6"/></svg>
<div class="t" style="left:234px;top:1816.5px;font-size:23.4px;color:#b3b3b3;-webkit-text-stroke:0.25px #b3b3b3">dataObjects.json</div>
<div class="a" style="left:114px;top:1854px;width:648px;height:50px;background:#404040"></div>
<div class="a" style="left:114px;top:1904px;width:648px;height:2px;background:#363636"></div>
<svg class="a" style="left:203px;top:1867px" width="19" height="25" viewBox="0 0 19 25" fill="none" stroke="#a8a8a8" stroke-width="1.6"><path d="M1 1 H12.2 L17.6 6.4 V23.6 H1 Z M12.2 1 V6.4 H17.6"/></svg>
<div class="t" style="left:234px;top:1868.5px;font-size:23.4px;color:#b3b3b3;-webkit-text-stroke:0.25px #b3b3b3">inspection_results.json</div>
<div class="a" style="left:114px;top:1906px;width:648px;height:50px;background:#404040"></div>
<div class="a" style="left:114px;top:1956px;width:648px;height:2px;background:#363636"></div>
<svg class="a" style="left:203px;top:1919px" width="19" height="25" viewBox="0 0 19 25" fill="none" stroke="#a8a8a8" stroke-width="1.6"><path d="M1 1 H12.2 L17.6 6.4 V23.6 H1 Z M12.2 1 V6.4 H17.6"/></svg>
<div class="t" style="left:234px;top:1920.5px;font-size:23.4px;color:#b3b3b3;-webkit-text-stroke:0.25px #b3b3b3">mvnw</div>
<div class="a" style="left:114px;top:1958px;width:648px;height:50px;background:#404040"></div>
<div class="a" style="left:114px;top:2008px;width:648px;height:2px;background:#363636"></div>
<svg class="a" style="left:203px;top:1971px" width="19" height="25" viewBox="0 0 19 25" fill="none" stroke="#a8a8a8" stroke-width="1.6"><path d="M1 1 H12.2 L17.6 6.4 V23.6 H1 Z M12.2 1 V6.4 H17.6"/></svg>
<div class="t" style="left:234px;top:1972.5px;font-size:23.4px;color:#b3b3b3;-webkit-text-stroke:0.25px #b3b3b3">mvnw.cmd</div>
<div class="a" style="left:114px;top:2010px;width:648px;height:50px;background:#404040"></div>
<div class="a" style="left:114px;top:2060px;width:648px;height:2px;background:#363636"></div>
<svg class="a" style="left:203px;top:2023px" width="19" height="25" viewBox="0 0 19 25" fill="none" stroke="#a8a8a8" stroke-width="1.6"><path d="M1 1 H12.2 L17.6 6.4 V23.6 H1 Z M12.2 1 V6.4 H17.6"/></svg>
<div class="t" style="left:234px;top:2024.5px;font-size:23.4px;color:#b3b3b3;-webkit-text-stroke:0.25px #b3b3b3">pom.xml</div>
<div class="a" style="left:114px;top:2062px;width:648px;height:50px;background:#404040"></div>
<div class="a" style="left:114px;top:2112px;width:648px;height:2px;background:#363636"></div>
<svg class="a" style="left:203px;top:2075px" width="19" height="25" viewBox="0 0 19 25" fill="none" stroke="#a8a8a8" stroke-width="1.6"><path d="M1 1 H12.2 L17.6 6.4 V23.6 H1 Z M12.2 1 V6.4 H17.6"/></svg>
<div class="t" style="left:234px;top:2076.5px;font-size:23.4px;color:#b3b3b3;-webkit-text-stroke:0.25px #b3b3b3">README.md</div>
<div class="a" style="left:114px;top:2114px;width:648px;height:50px;background:#404040"></div>
<div class="a" style="left:114px;top:2164px;width:648px;height:2px;background:#363636"></div>
<svg class="a" style="left:203px;top:2127px" width="19" height="25" viewBox="0 0 19 25" fill="none" stroke="#a8a8a8" stroke-width="1.6"><path d="M1 1 H12.2 L17.6 6.4 V23.6 H1 Z M12.2 1 V6.4 H17.6"/></svg>
<div class="t" style="left:234px;top:2128.5px;font-size:23.4px;color:#b3b3b3;-webkit-text-stroke:0.25px #b3b3b3">ui-build.js</div>
<div class="a" style="left:764px;top:1141px;width:6px;height:100px;border-radius:3px;background:#5c5c5c"></div>
<div class="t" style="left:850px;top:109px;font-size:27.7px;color:#dadada"><span style="-webkit-text-stroke:0.45px #dadada">File Path: </span><span style="color:#a6a6a6">Project: SampleApp &gt; </span><span style="-webkit-text-stroke:0.45px #dadada">src/main/webapp/app.js</span></div>
<svg class="a" style="left:3797px;top:96px" width="50" height="50" viewBox="0 0 50 50" fill="none" stroke="#a9a9a9" stroke-width="2.7" stroke-linejoin="round"><path d="M20.83 10.84 L22.59 6.98 L27.61 6.98 L29.37 10.84 A14.60 14.60 0 0 1 31.95 11.91 L35.93 10.42 L39.48 13.97 L37.99 17.95 A14.60 14.60 0 0 1 39.06 20.53 L42.92 22.29 L42.92 27.31 L39.06 29.07 A14.60 14.60 0 0 1 37.99 31.65 L39.48 35.63 L35.93 39.18 L31.95 37.69 A14.60 14.60 0 0 1 29.37 38.76 L27.61 42.62 L22.59 42.62 L20.83 38.76 A14.60 14.60 0 0 1 18.25 37.69 L14.27 39.18 L10.72 35.63 L12.21 31.65 A14.60 14.60 0 0 1 11.14 29.07 L7.28 27.31 L7.28 22.29 L11.14 20.53 A14.60 14.60 0 0 1 12.21 17.95 L10.72 13.97 L14.27 10.42 L18.25 11.91 A14.60 14.60 0 0 1 20.83 10.84 Z"/><circle cx="25.1" cy="24.8" r="9.2"/></svg>
<svg class="a" style="left:3871px;top:105px" width="42" height="36" viewBox="0 0 42 36" fill="none" stroke="#a9a9a9" stroke-width="2.4" stroke-linecap="round" stroke-linejoin="round"><path d="M2 20 V30 C2 33 4 34 6 34 H36 C38 34 40 33 40 30 V20"/><path d="M21 2 V24 M13.5 17 L21 24 L28.5 17"/></svg>
<svg class="a" style="left:3941px;top:102px" width="42" height="42" viewBox="0 0 42 42" fill="none" stroke="#a9a9a9" stroke-width="2.6" stroke-linejoin="round"><path d="M2.5 4 C2.5 3 3 2.5 4 2.5 H31 L39.5 11 V38 C39.5 39 39 39.5 38 39.5 H4 C3 39.5 2.5 39 2.5 38 Z"/><path d="M10 2.5 V14 H29 V2.5"/><circle cx="20.5" cy="27.5" r="5.5"/></svg>
<svg class="a" style="left:4022px;top:100px" width="36" height="42" viewBox="0 0 36 42" fill="none" stroke="#a9a9a9" stroke-width="2.4" stroke-linecap="round" stroke-linejoin="round"><path d="M1 8 H35"/><path d="M11.5 7.5 V2 H24.5 V7.5"/><path d="M4.5 8.5 L6.5 38 C6.5 39.5 7.5 40 9 40 H27 C28.5 40 29.5 39.5 29.5 38 L31.5 8.5"/><path d="M14 11 V35 M22 11 V35"/></svg>
<div class="a" style="left:774px;top:170px;width:100px;height:37px;background:#353637"></div>
<div class="a" style="left:874px;top:170px;width:3219px;height:37px;background:#353637"></div>
<div class="a" style="left:882px;top:170px;width:4px;height:37px;background:#4a6238"></div>
<div class="gn" style="top:170px">1</div>
<svg class="a" style="left:855px;top:185px" width="11" height="8" viewBox="0 0 11 8"><path d="M0 0 H11 L5.5 7 Z" fill="#7a7a7a"/></svg>
<div class="cl" style="top:170px"><span class="c">/*</span><span class="i">¬</span></div>
<div class="gn" style="top:207px">2</div>
<div class="cl" style="top:207px"><b class="d"></b><span class="c">*</span><b class="d"></b><span class="c">Use</span><b class="d"></b><span class="c">App.getDependency</span><b class="d"></b><span class="c">for</span><b class="d"></b><span class="c">Dependency</span><b class="d"></b><span class="c">Injection</span><span class="i">¬</span></div>
<div class="gn" style="top:244px">3</div>
<div class="cl" style="top:244px"><b class="d"></b><span class="c">*</span><b class="d"></b><span class="c">eg:</span><b class="d"></b><span class="c">var</span><b class="d"></b><span class="c">DialogService</span><b class="d"></b><span class="c">=</span><b class="d"></b><span class="c">App.getDependency('DialogService');</span><span class="i">¬</span></div>
<div class="gn" style="top:281px">4</div>
<div class="cl" style="top:281px"><b class="d"></b><span class="c">*/</span><span class="i">¬</span></div>
<div class="gn" style="top:318px">5</div>
<div class="cl" style="top:318px"><span class="i">¬</span></div>
<div class="gn" style="top:355px">6</div>
<div class="cl" style="top:355px"><span class="c">/*</span><b class="d"></b><span class="c">perform</span><b class="d"></b><span class="c">any</span><b class="d"></b><span class="c">action</span><b class="d"></b><span class="c">on</span><b class="d"></b><span class="c">the</span><b class="d"></b><span class="c">variables</span><b class="d"></b><span class="c">within</span><b class="d"></b><span class="c">this</span><b class="d"></b><span class="c">block(on-page-load)</span><b class="d"></b><span class="c">*/</span><span class="i">¬</span></div>
<div class="gn" style="top:392px">7</div>
<svg class="a" style="left:855px;top:407px" width="11" height="8" viewBox="0 0 11 8"><path d="M0 0 H11 L5.5 7 Z" fill="#7a7a7a"/></svg>
<div class="cl" style="top:392px">App.<span class="f">onAppVariablesReady</span><b class="d"></b><span class="k">=</span><b class="d"></b>function()<b class="d"></b>{<span class="i">¬</span></div>
<div class="gn" style="top:429px">8</div>
<svg class="a" style="left:855px;top:444px" width="11" height="8" viewBox="0 0 11 8"><path d="M0 0 H11 L5.5 7 Z" fill="#7a7a7a"/></svg>
<div class="cl" style="top:429px"><b class="d"></b><b class="d"></b><b class="d"></b><b class="d"></b><span class="c">/*</span><span class="i">¬</span></div>
<div class="gn" style="top:466px">9</div>
<div class="cl" style="top:466px"><b class="d"></b><b class="d"></b><b class="d"></b><b class="d"></b><b class="d"></b><span class="c">*</span><b class="d"></b><span class="c">variables</span><b class="d"></b><span class="c">can</span><b class="d"></b><span class="c">be</span><b class="d"></b><span class="c">accessed</span><b class="d"></b><span class="c">through</span><b class="d"></b><span class="c">'App.Variables'</span><b class="d"></b><span class="c">property</span><b class="d"></b><span class="c">here</span><span class="i">¬</span></div>
<div class="gn" style="top:503px">10</div>
<div class="cl" style="top:503px"><b class="d"></b><b class="d"></b><b class="d"></b><b class="d"></b><b class="d"></b><span class="c">*</span><b class="d"></b><span class="c">e.g.</span><b class="d"></b><span class="c">App.Variables.staticVariable1.getData()</span><span class="i">¬</span></div>
<div class="gn" style="top:540px">11</div>
<div class="cl" style="top:540px"><b class="d"></b><b class="d"></b><b class="d"></b><b class="d"></b><b class="d"></b><span class="c">*/</span><span class="i">¬</span></div>
<div class="gn" style="top:577px">12</div>
<div class="cl" style="top:577px">};<span class="i">¬</span></div>
<div class="gn" style="top:614px">13</div>
<div class="cl" style="top:614px"><span class="i">¬</span></div>
<div class="gn" style="top:651px">14</div>
<div class="cl" style="top:651px"><span class="c">/*</span><b class="d"></b><span class="c">perform</span><b class="d"></b><span class="c">any</span><b class="d"></b><span class="c">action</span><b class="d"></b><span class="c">on</span><b class="d"></b><span class="c">session</span><b class="d"></b><span class="c">timeout</span><b class="d"></b><span class="c">here,</span><b class="d"></b><span class="c">e.g</span><b class="d"></b><span class="c">clearing</span><b class="d"></b><span class="c">some</span><b class="d"></b><span class="c">data,</span><b class="d"></b><span class="c">etc</span><b class="d"></b><span class="c">*/</span><span class="i">¬</span></div>
<div class="gn" style="top:688px">15</div>
<svg class="a" style="left:855px;top:703px" width="11" height="8" viewBox="0 0 11 8"><path d="M0 0 H11 L5.5 7 Z" fill="#7a7a7a"/></svg>
<div class="cl" style="top:688px">App.<span class="f">onSessionTimeout</span><b class="d"></b><span class="k">=</span><b class="d"></b>function()<b class="d"></b>{<span class="i">¬</span></div>
<div class="gn" style="top:725px">16</div>
<svg class="a" style="left:855px;top:740px" width="11" height="8" viewBox="0 0 11 8"><path d="M0 0 H11 L5.5 7 Z" fill="#7a7a7a"/></svg>
<div class="cl" style="top:725px"><b class="d"></b><b class="d"></b><b class="d"></b><b class="d"></b><span class="c">/*</span><span class="i">¬</span></div>
<div class="gn" style="top:762px">17</div>
<div class="cl" style="top:762px"><b class="d"></b><b class="d"></b><b class="d"></b><b class="d"></b><b class="d"></b><span class="c">*</span><b class="d"></b><span class="c">NOTE:</span><span class="i">¬</span></div>
<div class="gn" style="top:799px">18</div>
<div class="cl" style="top:799px"><b class="d"></b><b class="d"></b><b class="d"></b><b class="d"></b><b class="d"></b><span class="c">*</span><b class="d"></b><span class="c">On</span><b class="d"></b><span class="c">re-login</span><b class="d"></b><span class="c">after</span><b class="d"></b><span class="c">session</span><b class="d"></b><span class="c">timeout:</span><span class="i">¬</span></div>
<div class="gn" style="top:836px">19</div>
<div class="cl" style="top:836px"><b class="d"></b><b class="d"></b><b class="d"></b><b class="d"></b><b class="d"></b><span class="c">*</span><b class="d"></b><span class="c">if</span><b class="d"></b><span class="c">the</span><b class="d"></b><span class="c">same</span><b class="d"></b><span class="c">user</span><b class="d"></b><span class="c">logs</span><b class="d"></b><span class="c">in(through</span><b class="d"></b><span class="c">login</span><b class="d"></b><span class="c">dialog),</span><b class="d"></b><span class="c">app</span><b class="d"></b><span class="c">will</span><b class="d"></b><span class="c">retain</span><b class="d"></b><span class="c">its</span><b class="d"></b><span class="c">state</span><span class="i">¬</span></div>
<div class="gn" style="top:873px">20</div>
<div class="cl" style="top:873px"><b class="d"></b><b class="d"></b><b class="d"></b><b class="d"></b><b class="d"></b><span class="c">*</span><b class="d"></b><span class="c">if</span><b class="d"></b><span class="c">a</span><b class="d"></b><span class="c">different</span><b class="d"></b><span class="c">user</span><b class="d"></b><span class="c">logs</span><b class="d"></b><span class="c">in,</span><b class="d"></b><span class="c">app</span><b class="d"></b><span class="c">will</span><b class="d"></b><span class="c">be</span><b class="d"></b><span class="c">reloaded</span><b class="d"></b><span class="c">and</span><b class="d"></b><span class="c">user</span><b class="d"></b><span class="c">is</span><b class="d"></b><span class="c">redirected</span><b class="d"></b><span class="c">to</span><b class="d"></b><span class="c">respective</span><b class="d"></b><span class="c">landing</span><b class="d"></b><span class="c">page</span><b class="d"></b><span class="c">configured</span><b class="d"></b><span class="c">in</span><b class="d"></b><span class="c">Security.</span><span class="i">¬</span></div>
<div class="gn" style="top:910px">21</div>
<div class="cl" style="top:910px"><b class="d"></b><b class="d"></b><b class="d"></b><b class="d"></b><b class="d"></b><span class="c">*/</span><span class="i">¬</span></div>
<div class="gn" style="top:947px">22</div>
<div class="cl" style="top:947px">};<span class="i">¬</span></div>
<div class="gn" style="top:984px">23</div>
<div class="cl" style="top:984px"><span class="i">¬</span></div>
<div class="gn" style="top:1021px">24</div>
<svg class="a" style="left:855px;top:1036px" width="11" height="8" viewBox="0 0 11 8"><path d="M0 0 H11 L5.5 7 Z" fill="#7a7a7a"/></svg>
<div class="cl" style="top:1021px"><span class="c">/*</span><span class="i">¬</span></div>
<div class="gn" style="top:1058px">25</div>
<div class="cl" style="top:1058px"><b class="d"></b><span class="c">*</span><b class="d"></b><span class="c">This</span><b class="d"></b><span class="c">application</span><b class="d"></b><span class="c">level</span><b class="d"></b><span class="c">callback</span><b class="d"></b><span class="c">function</span><b class="d"></b><span class="c">will</span><b class="d"></b><span class="c">be</span><b class="d"></b><span class="c">invoked</span><b class="d"></b><span class="c">after</span><b class="d"></b><span class="c">the</span><b class="d"></b><span class="c">invocation</span><b class="d"></b><span class="c">of</span><b class="d"></b><span class="c">PAGE</span><b class="d"></b><span class="c">level</span><b class="d"></b><span class="c">onPageReady</span><b class="d"></b><span class="c">function.</span><span class="i">¬</span></div>
<div class="gn" style="top:1095px">26</div>
<div class="cl" style="top:1095px"><b class="d"></b><span class="c">*</span><b class="d"></b><span class="c">Use</span><b class="d"></b><span class="c">this</span><b class="d"></b><span class="c">function</span><b class="d"></b><span class="c">to</span><b class="d"></b><span class="c">write</span><b class="d"></b><span class="c">common</span><b class="d"></b><span class="c">logic</span><b class="d"></b><span class="c">across</span><b class="d"></b><span class="c">the</span><b class="d"></b><span class="c">pages</span><b class="d"></b><span class="c">in</span><b class="d"></b><span class="c">the</span><b class="d"></b><span class="c">application.</span><span class="i">¬</span></div>
<div class="gn" style="top:1132px">27</div>
<div class="cl" style="top:1132px"><b class="d"></b><span class="c">*</span><b class="d"></b><span class="c">activePageName</span><b class="d"></b><span class="c">:</span><b class="d"></b><span class="c">name</span><b class="d"></b><span class="c">of</span><b class="d"></b><span class="c">the</span><b class="d"></b><span class="c">page</span><span class="i">¬</span></div>
<div class="gn" style="top:1169px">28</div>
<div class="cl" style="top:1169px"><b class="d"></b><span class="c">*</span><b class="d"></b><span class="c">activePageScope:</span><b class="d"></b><span class="c">scope</span><b class="d"></b><span class="c">of</span><b class="d"></b><span class="c">the</span><b class="d"></b><span class="c">page</span><span class="i">¬</span></div>
<div class="gn" style="top:1206px">29</div>
<div class="cl" style="top:1206px"><b class="d"></b><span class="c">*</span><b class="d"></b><span class="c">$activePageEl</span><b class="d"></b><b class="d"></b><span class="c">:</span><b class="d"></b><span class="c">page</span><b class="d"></b><span class="c">jQuery</span><b class="d"></b><span class="c">element</span><span class="i">¬</span></div>
<div class="gn" style="top:1243px">30</div>
<div class="cl" style="top:1243px"><b class="d"></b><span class="c">*/</span><span class="i">¬</span></div>
<div class="gn" style="top:1280px">31</div>
<svg class="a" style="left:855px;top:1295px" width="11" height="8" viewBox="0 0 11 8"><path d="M0 0 H11 L5.5 7 Z" fill="#7a7a7a"/></svg>
<div class="cl" style="top:1280px">App.<span class="f">onPageReady</span><b class="d"></b><span class="k">=</span><b class="d"></b>function(<span class="p">activePageName</span>,<b class="d"></b><span class="p">activePageScope</span>,<b class="d"></b><span class="p">$activePageEl</span>)<b class="d"></b>{<span class="i">¬</span></div>
<div class="gn" style="top:1317px">32</div>
<div class="cl" style="top:1317px"><span class="i">¬</span></div>
<div class="gn" style="top:1354px">33</div>
<div class="cl" style="top:1354px">};<span class="i">¬</span></div>
<div class="gn" style="top:1391px">34</div>
<div class="cl" style="top:1391px"><span class="i">¬</span></div>
<div class="gn" style="top:1428px">35</div>
<svg class="a" style="left:855px;top:1443px" width="11" height="8" viewBox="0 0 11 8"><path d="M0 0 H11 L5.5 7 Z" fill="#7a7a7a"/></svg>
<div class="cl" style="top:1428px">App.<span class="f">customModule</span><b class="d"></b><span class="k">=</span><b class="d"></b>function()<b class="d"></b>{<span class="i">¬</span></div>
<div class="gn" style="top:1465px">36</div>
<div class="cl" style="top:1465px"><b class="d"></b><b class="d"></b><b class="d"></b><b class="d"></b><span class="k">return</span><b class="d"></b>require(<span class="s">'./assets/resources/files/customScript.js'</span>);<span class="i">¬</span></div>
<div class="gn" style="top:1502px">37</div>
<div class="cl" style="top:1502px">}<span class="i">¬</span></div>
<div class="gn" style="top:1539px">38</div>
<div class="cl" style="top:1539px"><span class="i">¬</span></div>
<div class="gn" style="top:1576px">39</div>
<svg class="a" style="left:855px;top:1591px" width="11" height="8" viewBox="0 0 11 8"><path d="M0 0 H11 L5.5 7 Z" fill="#7a7a7a"/></svg>
<div class="cl" style="top:1576px"><span class="c">/*</span><span class="i">¬</span></div>
<div class="gn" style="top:1613px">40</div>
<div class="cl" style="top:1613px"><b class="d"></b><span class="c">*</span><b class="d"></b><span class="c">This</span><b class="d"></b><span class="c">application</span><b class="d"></b><span class="c">level</span><b class="d"></b><span class="c">callback</span><b class="d"></b><span class="c">function</span><b class="d"></b><span class="c">will</span><b class="d"></b><span class="c">be</span><b class="d"></b><span class="c">invoked</span><b class="d"></b><span class="c">after</span><b class="d"></b><span class="c">a</span><b class="d"></b><span class="c">Variable</span><b class="d"></b><span class="c">receives</span><b class="d"></b><span class="c">an</span><b class="d"></b><span class="c">error</span><b class="d"></b><span class="c">from</span><b class="d"></b><span class="c">the</span><b class="d"></b><span class="c">target</span><b class="d"></b><span class="c">service.</span><span class="i">¬</span></div>
<div class="gn" style="top:1650px">41</div>
<div class="cl" style="top:1650px"><b class="d"></b><span class="c">*</span><b class="d"></b><span class="c">Use</span><b class="d"></b><span class="c">this</span><b class="d"></b><span class="c">function</span><b class="d"></b><span class="c">to</span><b class="d"></b><span class="c">write</span><b class="d"></b><span class="c">common</span><b class="d"></b><span class="c">error</span><b class="d"></b><span class="c">handling</span><b class="d"></b><span class="c">logic</span><b class="d"></b><span class="c">across</span><b class="d"></b><span class="c">the</span><b class="d"></b><span class="c">application.</span><span class="i">¬</span></div>
<div class="gn" style="top:1687px">42</div>
<div class="cl" style="top:1687px"><b class="d"></b><span class="c">*</span><b class="d"></b><span class="c">errorMsg:</span><b class="d"></b><b class="d"></b><b class="d"></b><b class="d"></b><span class="c">The</span><b class="d"></b><span class="c">error</span><b class="d"></b><span class="c">message</span><b class="d"></b><span class="c">returned</span><b class="d"></b><span class="c">by</span><b class="d"></b><span class="c">the</span><b class="d"></b><span class="c">target</span><b class="d"></b><span class="c">service.</span><b class="d"></b><span class="c">This</span><b class="d"></b><span class="c">message</span><b class="d"></b><span class="c">will</span><b class="d"></b><span class="c">be</span><b class="d"></b><span class="c">displayed</span><b class="d"></b><span class="c">through</span><b class="d"></b><span class="c">appNotification</span><b class="d"></b><span class="c">variable</span><span class="i">¬</span></div>
<div class="gn" style="top:1724px">43</div>
<div class="cl" style="top:1724px"><b class="d"></b><span class="c">*</span><b class="d"></b><b class="d"></b><b class="d"></b><b class="d"></b><b class="d"></b><b class="d"></b><b class="d"></b><b class="d"></b><b class="d"></b><b class="d"></b><b class="d"></b><b class="d"></b><b class="d"></b><b class="d"></b><span class="c">You</span><b class="d"></b><span class="c">can</span><b class="d"></b><span class="c">change</span><b class="d"></b><span class="c">this</span><b class="d"></b><span class="c">though</span><b class="d"></b><span class="c">App.Variables.appNotification.setMessage(YOUR_CUSTOM_MESSAGE)</span><span class="i">¬</span></div>
<div class="gn" style="top:1761px">44</div>
<div class="cl" style="top:1761px"><b class="d"></b><span class="c">*</span><b class="d"></b><span class="c">xhrObj:</span><b class="d"></b><b class="d"></b><b class="d"></b><b class="d"></b><b class="d"></b><b class="d"></b><span class="c">The</span><b class="d"></b><span class="c">xhrObject</span><b class="d"></b><span class="c">used</span><b class="d"></b><span class="c">to</span><b class="d"></b><span class="c">make</span><b class="d"></b><span class="c">the</span><b class="d"></b><span class="c">service</span><b class="d"></b><span class="c">call</span><span class="i">¬</span></div>
<div class="gn" style="top:1798px">45</div>
<div class="cl" style="top:1798px"><b class="d"></b><span class="c">*</span><b class="d"></b><b class="d"></b><b class="d"></b><b class="d"></b><b class="d"></b><b class="d"></b><b class="d"></b><b class="d"></b><b class="d"></b><b class="d"></b><b class="d"></b><b class="d"></b><b class="d"></b><b class="d"></b><span class="c">This</span><b class="d"></b><span class="c">object</span><b class="d"></b><span class="c">contains</span><b class="d"></b><span class="c">useful</span><b class="d"></b><span class="c">information</span><b class="d"></b><span class="c">like</span><b class="d"></b><span class="c">statusCode,</span><b class="d"></b><span class="c">url,</span><b class="d"></b><span class="c">request/response</span><b class="d"></b><span class="c">body.</span><span class="i">¬</span></div>
<div class="gn" style="top:1835px">46</div>
<div class="cl" style="top:1835px"><b class="d"></b><span class="c">*/</span><span class="i">¬</span></div>
<div class="gn" style="top:1872px">47</div>
<svg class="a" style="left:855px;top:1887px" width="11" height="8" viewBox="0 0 11 8"><path d="M0 0 H11 L5.5 7 Z" fill="#7a7a7a"/></svg>
<div class="cl" style="top:1872px">App.<span class="f">onServiceError</span><b class="d"></b><span class="k">=</span><b class="d"></b>function(<span class="p">errorMsg</span>,<b class="d"></b><span class="p">xhrObj</span>)<b class="d"></b>{<span class="i">¬</span></div>
<div class="gn" style="top:1909px">48</div>
<div class="cl" style="top:1909px"><span class="i">¬</span></div>
<div class="gn" style="top:1946px">49</div>
<div class="cl" style="top:1946px">};<span class="i">¬</span></div>
<div class="gn" style="top:1983px">50</div>
<div class="cl" style="top:1983px"><span class="i">¶</span></div>
<div class="t" style="left:790px;top:1508px;font-family:'Liberation Serif',serif;font-style:italic;font-weight:bold;font-size:24px;color:#8c8c8c;-webkit-text-stroke:0.5px #8c8c8c">i</div>
<div class="a" style="left:865px;top:1403px;width:1264px;height:156px;border:6px solid #f39a38;border-radius:22px"></div></body></html>
